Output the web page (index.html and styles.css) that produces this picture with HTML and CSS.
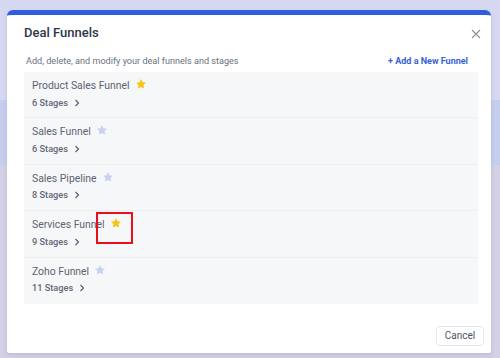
FILE: index.html
```html
<!DOCTYPE html>
<html lang="en">
<head>
    <meta charset="UTF-8">
    <meta name="viewport" content="width=device-width, initial-scale=1.0">
    <title>Deal Funnels</title>
    <link rel="stylesheet" href="styles.css">
</head>
<body>
    <div class="modal">
        <div class="modal-header">
            <h1>Deal Funnels</h1>
            <svg class="close" width="10" height="10" viewBox="0 0 10 10">
                <path d="M1 1L9 9M9 1L1 9" stroke="#8b909a" stroke-width="1.1" fill="none"/>
            </svg>
        </div>

        <div class="toolbar">
            <span class="hint">Add, delete, and modify your deal funnels and stages</span>
            <a class="add-link" href="#">+ Add a New Funnel</a>
        </div>

        <div class="funnel-list">
            <div class="funnel">
                <div class="funnel-name">Product Sales Funnel
                    <svg class="star starred" viewBox="0 0 24 24"><path d="M12 2l3.09 6.26L22 9.27l-5 4.87 1.18 6.88L12 17.77l-6.18 3.25L7 14.14 2 9.27l6.91-1.01z"/></svg>
                </div>
                <div class="stages">6 Stages
                    <svg class="chev" viewBox="0 0 6 8"><path d="M1.5 1l3 3-3 3"/></svg>
                </div>
            </div>
            <div class="funnel">
                <div class="funnel-name">Sales Funnel
                    <svg class="star" viewBox="0 0 24 24"><path d="M12 2l3.09 6.26L22 9.27l-5 4.87 1.18 6.88L12 17.77l-6.18 3.25L7 14.14 2 9.27l6.91-1.01z"/></svg>
                </div>
                <div class="stages">6 Stages
                    <svg class="chev" viewBox="0 0 6 8"><path d="M1.5 1l3 3-3 3"/></svg>
                </div>
            </div>
            <div class="funnel">
                <div class="funnel-name">Sales Pipeline
                    <svg class="star" viewBox="0 0 24 24"><path d="M12 2l3.09 6.26L22 9.27l-5 4.87 1.18 6.88L12 17.77l-6.18 3.25L7 14.14 2 9.27l6.91-1.01z"/></svg>
                </div>
                <div class="stages">8 Stages
                    <svg class="chev" viewBox="0 0 6 8"><path d="M1.5 1l3 3-3 3"/></svg>
                </div>
            </div>
            <div class="funnel">
                <div class="funnel-name">Services Funnel
                    <svg class="star starred" viewBox="0 0 24 24"><path d="M12 2l3.09 6.26L22 9.27l-5 4.87 1.18 6.88L12 17.77l-6.18 3.25L7 14.14 2 9.27l6.91-1.01z"/></svg>
                </div>
                <div class="stages">9 Stages
                    <svg class="chev" viewBox="0 0 6 8"><path d="M1.5 1l3 3-3 3"/></svg>
                </div>
            </div>
            <div class="funnel">
                <div class="funnel-name">Zoho Funnel
                    <svg class="star" viewBox="0 0 24 24"><path d="M12 2l3.09 6.26L22 9.27l-5 4.87 1.18 6.88L12 17.77l-6.18 3.25L7 14.14 2 9.27l6.91-1.01z"/></svg>
                </div>
                <div class="stages">11 Stages
                    <svg class="chev" viewBox="0 0 6 8"><path d="M1.5 1l3 3-3 3"/></svg>
                </div>
            </div>
        </div>

        <div class="modal-footer">
            <button class="btn-cancel">Cancel</button>
        </div>

        <!-- annotation box from the screenshot -->
        <div class="highlight"></div>
    </div>
</body>
</html>
```

FILE: styles.css
```css
body {
    margin: 0;
    width: 500px;
    height: 358px;
    overflow: hidden;
    font-family: Roboto, 'Noto Sans', sans-serif;
    background: linear-gradient(to bottom, #d5d8f0 0, #d5d8f0 100px, #c6cef0 100px, #c6cef0 165px, #d4d1e6 165px);
}

.modal {
    position: relative;
    box-sizing: border-box;
    width: 484px;
    height: 343px;
    margin: 10px 0 0 7px;
    background: #fff;
    border-top: 5px solid #2f5fd8;
    border-radius: 6px 6px 2px 2px;
    box-shadow: 0 2px 4px rgba(60, 60, 100, 0.15);
    display: flex;
    flex-direction: column;
}

.modal-header {
    display: flex;
    justify-content: space-between;
    align-items: center;
    padding: 8px 10px 0 17px;
}

h1 {
    margin: 0;
    font-size: 13px;
    line-height: 20px;
    font-weight: 500;
    color: #2e3646;
}

.close {
    display: block;
    margin-top: 1px;
}

.toolbar {
    display: flex;
    justify-content: space-between;
    align-items: center;
    margin-top: 11px;
    padding: 0 23px 0 19px;
    line-height: 14px;
}

.hint {
    font-size: 9.1px;
    color: #6b7280;
}

.add-link {
    font-size: 9px;
    font-weight: 700;
    color: #3563d9;
    text-decoration: none;
}

.funnel-list {
    margin: 4px 13px 0 17px;
    background-color: #f6f7f9;
}

.funnel {
    box-sizing: border-box;
    height: 46.4px;
    padding: 7px 8px 0;
    border-bottom: 1px solid #eceef2;
}

.funnel:last-child {
    border-bottom: none;
}

.funnel-name {
    display: flex;
    align-items: center;
    font-size: 10.4px;
    line-height: 14px;
    color: #5c6371;
}

.star {
    width: 12px;
    height: 12px;
    margin-left: 5px;
    margin-top: -4px;
    fill: #c7d1f1;
}

.star.starred {
    fill: #f5c518;
}

.stages {
    display: flex;
    align-items: center;
    margin-top: 2.5px;
    font-size: 9.2px;
    line-height: 14px;
    font-weight: 500;
    color: #60667282;
    color: #626875;
}

.chev {
    width: 6px;
    height: 8px;
    margin-left: 6px;
    fill: none;
    stroke: #5a606c;
    stroke-width: 1.2;
}

.modal-footer {
    display: flex;
    justify-content: flex-end;
    margin-top: 22px;
    padding-right: 7px;
}

.btn-cancel {
    width: 48px;
    height: 20px;
    padding: 0;
    background: #fff;
    border: 1px solid #e2e5ea;
    border-radius: 4px;
    font-family: inherit;
    font-size: 10px;
    color: #4d5462;
}

.highlight {
    position: absolute;
    left: 89px;
    top: 197px;
    width: 33px;
    height: 28px;
    border: 2px solid #e8101a;
}
```
